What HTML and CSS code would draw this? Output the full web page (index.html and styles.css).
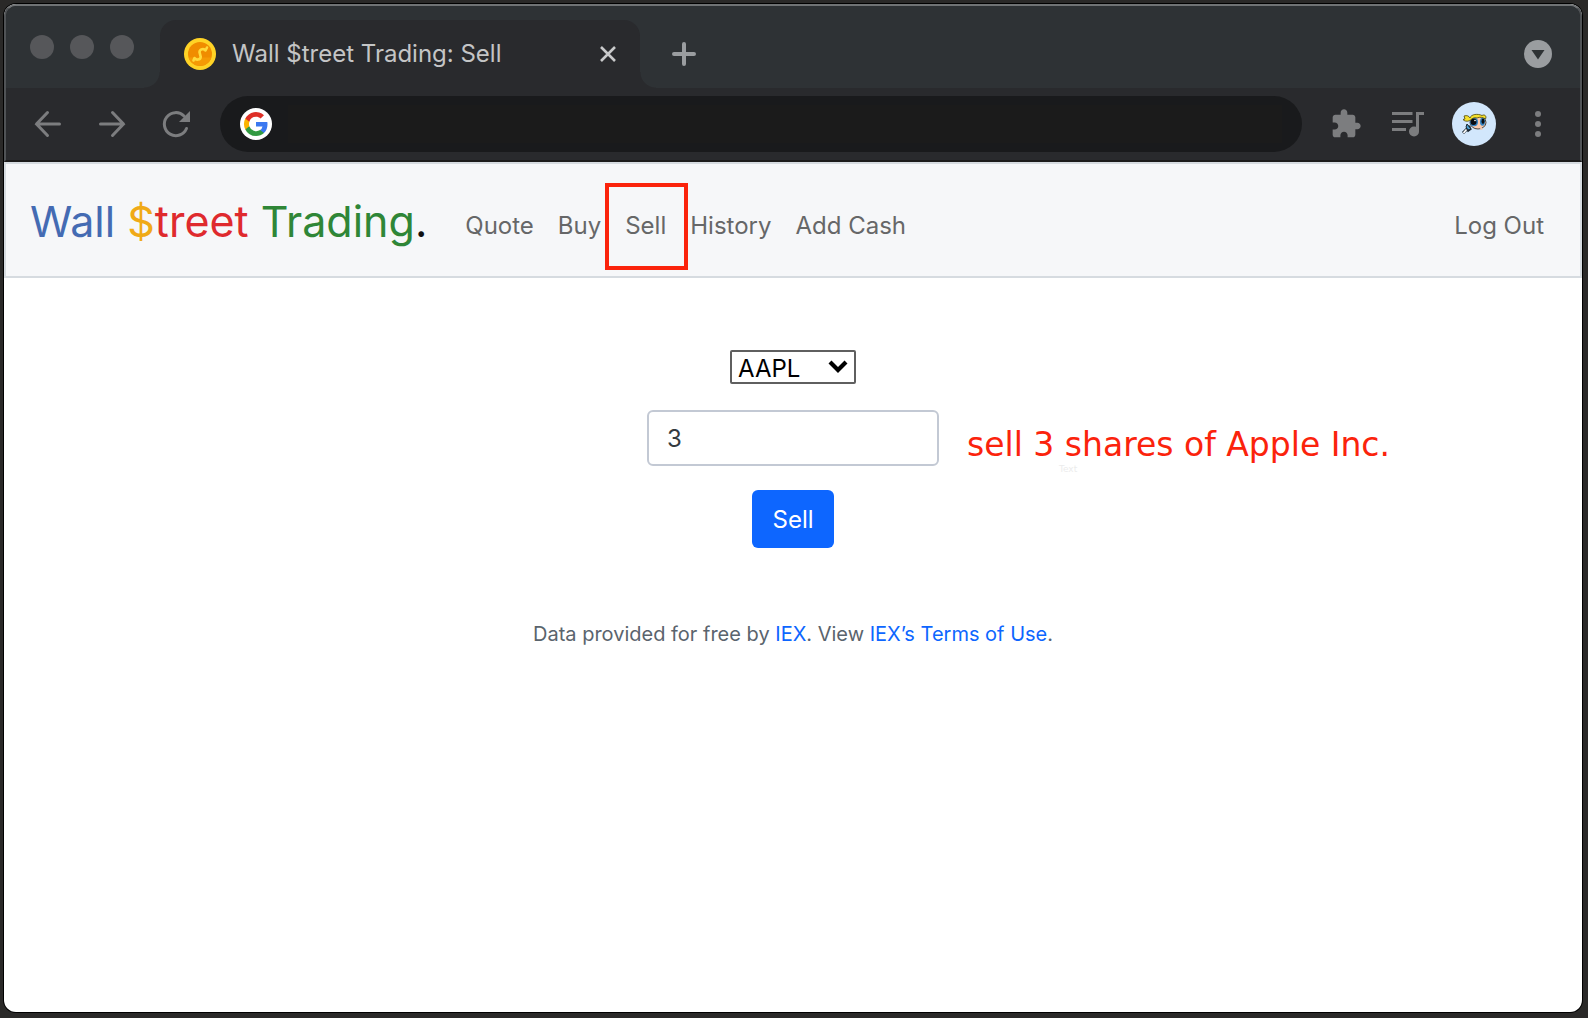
FILE: index.html
```html
<!DOCTYPE html>
<html lang="en">
<head>
<meta charset="utf-8">
<meta name="viewport" content="width=device-width, initial-scale=1">
<title>Wall $treet Trading: Sell</title>
<link rel="stylesheet" href="styles.css">
</head>
<body>
<div class="window">
  <header class="chrome">
    <div class="tabstrip">
      <div class="lights"><span class="light"></span><span class="light"></span><span class="light"></span></div>
      <div class="tab">
        <svg class="favicon" width="32" height="32" viewBox="0 0 32 32" aria-hidden="true">
          <circle cx="16" cy="16" r="16" fill="#ffd326"/>
          <circle cx="16" cy="16" r="12" fill="#f08c00"/>
          <path d="M4.600 19.500A12 12 0 0 0 27.400 19.500Z" fill="#f59a05"/>
          <path d="M10.500 20c1.500 2.500 6 2 6.200-1.200l-1.200-4.600c.2-3.400 4.500-3.900 6-1.700M21.500 12.500l1.500-3M10.500 20L9.500 22.500" fill="none" stroke="#ffd93b" stroke-width="2.600" stroke-linecap="round"/>
        </svg>
        <span class="tab-title">Wall $treet Trading: Sell</span>
        <button class="tab-close" type="button" aria-label="Close tab">
          <svg width="16" height="16" viewBox="0 0 16 16"><path d="M1 1L15 15M15 1L1 15" stroke="#c9cacb" stroke-width="2.600"/></svg>
        </button>
      </div>
      <button class="tab-new" type="button" aria-label="New tab">
        <svg width="24" height="24" viewBox="0 0 24 24"><path d="M12 2V22M2 12H22" stroke="#9a9da0" stroke-width="4" stroke-linecap="round"/></svg>
      </button>
      <button class="tab-search" type="button" aria-label="Search tabs">
        <svg width="28" height="28" viewBox="0 0 28 28"><circle cx="14" cy="14" r="14" fill="#9a9da0"/><path d="M7.500 10H20.500L14 19.500Z" fill="#2e3235"/></svg>
      </button>
    </div>
    <div class="toolbar">
      <div class="history">
        <button class="tool" type="button" aria-label="Back">
          <svg width="32" height="32" viewBox="0 0 32 32"><path d="M27.500 16H4.500M15.500 4.500L4.500 16L15.500 27.500" class="line"/></svg>
        </button>
        <button class="tool" type="button" aria-label="Forward">
          <svg width="32" height="32" viewBox="0 0 32 32"><path d="M4.500 16H27.500M16.500 4.500L27.500 16L16.500 27.500" class="line"/></svg>
        </button>
        <button class="tool" type="button" aria-label="Reload">
          <svg width="32" height="32" viewBox="0 0 32 32"><path d="M26.500 20.500A11.500 11.500 0 1 1 24 8" class="line"/><path d="M30 3V14H19Z" fill="#7c7d7f"/></svg>
        </button>
      </div>
      <label class="omnibox">
        <svg width="32" height="32" viewBox="0 0 32 32" aria-hidden="true">
          <circle cx="16" cy="16" r="16" fill="#fff"/>
          <g transform="translate(4 4)">
            <path d="M23.500 12.300c0-.8-.1-1.600-.2-2.300H12v4.500h6.500a5.500 5.500 0 0 1-2.400 3.600v3h3.900c2.300-2.100 3.500-5.200 3.500-8.800Z" fill="#3b78f0"/>
            <path d="M12 24c3.200 0 6-1.100 8-2.900l-3.900-3a7.300 7.300 0 0 1-10.800-3.800h-4v3.100A12 12 0 0 0 12 24Z" fill="#319a41"/>
            <path d="M5.300 14.300a7.200 7.200 0 0 1 0-4.600V6.600h-4a12 12 0 0 0 0 10.800Z" fill="#fbb400"/>
            <path d="M12 4.800c1.800 0 3.300.6 4.600 1.800L20 3.200A12 12 0 0 0 1.300 6.600l4 3.100A7.200 7.200 0 0 1 12 4.800Z" fill="#de2f27"/>
          </g>
        </svg>
        <input class="address" type="text" aria-label="Address">
      </label>
      <div class="actions">
        <button class="tool extensions" type="button" aria-label="Extensions">
          <svg width="32" height="32" viewBox="0 0 24 24"><path d="M20.500 11H19V7c0-1.100-.9-2-2-2h-4V3.500C13 2.120 11.880 1 10.500 1S8 2.120 8 3.500V5H4c-1.100 0-1.990.9-1.990 2v3.800H3.500c1.490 0 2.700 1.210 2.700 2.700s-1.210 2.700-2.700 2.700H2V20c0 1.100.9 2 2 2h3.800v-1.500c0-1.490 1.210-2.700 2.700-2.700s2.700 1.210 2.700 2.700V22H17c1.100 0 2-.9 2-2v-4h1.500c1.380 0 2.500-1.120 2.500-2.500S21.880 11 20.500 11z" fill="#7c7d7f"/></svg>
        </button>
        <button class="tool" type="button" aria-label="Media controls">
          <svg width="32" height="32" viewBox="0 0 32 32"><path d="M0 5.500H20.500M0 13.500H20.500M0 21.500H14" stroke="#7c7d7f" stroke-width="3"/><path d="M24 4H32V7H27V23.500H24Z" fill="#7c7d7f"/><circle cx="22" cy="23.500" r="5" fill="#7c7d7f"/></svg>
        </button>
        <button class="avatar" type="button" aria-label="Profile">
          <svg width="44" height="44" viewBox="0 0 44 44">
            <circle cx="22" cy="22" r="22" fill="#d2e7fc"/>
            <path d="M18 24L14 28L11 31M19 26L15 29" stroke="#1b2730" stroke-width="3"/>
            <path d="M15 22L19 27L16 28L14 25Z" fill="#4b9fd0" stroke="#1b2730"/>
            <path d="M14.500 27.500L11.500 31" stroke="#fff" stroke-width="1.800"/>
            <ellipse cx="26" cy="20.500" rx="8" ry="6.500" fill="#f8c9ad" stroke="#26221b" stroke-width=".8"/>
            <path d="M28.500 25.500L30 27.500" stroke="#f8c9ad" stroke-width="2"/>
            <ellipse cx="22" cy="20" rx="4" ry="4.200" fill="#3183c4"/>
            <ellipse cx="21.500" cy="19.800" rx="3" ry="3.300" fill="#090b10"/>
            <ellipse cx="30.500" cy="19.800" rx="2.500" ry="4" fill="#3183c4"/>
            <ellipse cx="31" cy="19.200" rx="1.500" ry="2.800" fill="#090b10"/>
            <circle cx="23" cy="18.500" r=".8" fill="#fff"/>
            <path d="M18 16C19 12 26 11.500 30 13.500C32.500 12 35 14 33.500 17C31 15.500 28 14.500 25 16C22 15 20 16.500 18 18.500C15 20 12 19 11 17.500L13 17L12 14C15 13 17 14 18 16Z" fill="#f5e02c" stroke="#4b4512" stroke-width=".8"/>
          </svg>
        </button>
        <button class="tool" type="button" aria-label="Menu">
          <svg width="32" height="32" viewBox="0 0 32 32" fill="#7c7d7f"><circle cx="16" cy="6" r="3"/><circle cx="16" cy="16" r="3"/><circle cx="16" cy="26" r="3"/></svg>
        </button>
      </div>
    </div>
  </header>

  <nav class="navbar">
    <a class="brand" href="#"><span class="blue">Wall</span> <span class="yellow">$</span><span class="red">treet</span> <span class="green">Trading</span>.</a>
    <ul class="links">
      <li><a class="link" href="#">Quote</a></li>
      <li><a class="link" href="#">Buy</a></li>
      <li class="marked"><a class="link" href="#">Sell</a></li>
      <li><a class="link" href="#">History</a></li>
      <li><a class="link" href="#">Add Cash</a></li>
    </ul>
    <a class="link logout" href="#">Log Out</a>
  </nav>

  <main class="main">
    <form class="form">
      <div class="picker">
        <select class="symbol" aria-label="Symbol"><option>AAPL</option></select>
        <svg class="picker-arrow" width="20" height="14" viewBox="0 0 20 14" aria-hidden="true"><path d="M2 2L10 10L18 2" fill="none" stroke="#000" stroke-width="4.200"/></svg>
      </div>
      <div class="amount">
        <input class="shares" type="text" inputmode="numeric" value="3" aria-label="Shares">
        <span class="note">sell 3 shares of Apple Inc.</span>
        <span class="note-stub">Text</span>
      </div>
      <button class="submit" type="submit">Sell</button>
    </form>
  </main>
  <footer class="footer">Data provided for free by <a href="#">IEX</a>. View <a href="#">IEX’s Terms of Use</a>.</footer>
</div>
</body>
</html>
```
FILE: styles.css
```css
* {
  box-sizing: border-box;
}

body {
  margin: 0;
  padding: 4px 6px 6px 4px;
  background: #2a2928;
  font-family: Inter, "Liberation Sans", sans-serif;
  font-size: 24px;
  line-height: 36px;
}

button {
  display: flex;
  align-items: center;
  justify-content: center;
  padding: 0;
  border: 0;
  background: none;
  font: inherit;
}

a {
  text-decoration: none;
}

.window {
  display: flex;
  flex-direction: column;
  min-height: calc(100vh - 10px);
  border-radius: 12px;
  background: #fff;
  box-shadow: 0 0 0 1px #000;
}

/* Browser frame */
.chrome {
  border: 2px solid #505356;
  border-top-color: #707375;
  border-bottom-color: #1c1b1b;
  border-radius: 12px 12px 0 0;
  background: #292a2d;
}

.tabstrip {
  display: flex;
  align-items: center;
  height: 82px;
  padding: 14px 28px 0 24px;
  border-radius: 10px 10px 0 0;
  background: #2e3235;
}

.lights {
  display: flex;
  gap: 16px;
  width: 130px;
  padding-bottom: 14px;
}

.light {
  width: 24px;
  height: 24px;
  border-radius: 50%;
  background: #56575a;
}

.tab {
  position: relative;
  display: flex;
  align-items: center;
  gap: 16px;
  width: 480px;
  height: 68px;
  padding: 0 24px;
  border-radius: 16px 16px 0 0;
  background: #292a2d;
}

.tab::before,
.tab::after {
  content: "";
  position: absolute;
  bottom: 0;
  width: 16px;
  height: 16px;
}

.tab::before {
  right: 100%;
  background: radial-gradient(circle at 0 0, transparent 15px, #292a2d 16px);
}

.tab::after {
  left: 100%;
  background: radial-gradient(circle at 100% 0, transparent 15px, #292a2d 16px);
}

.tab-title {
  flex: 1;
  color: #c4c5c6;
  white-space: nowrap;
}

.tab-new {
  margin-left: 32px;
}

.tab-search {
  margin-left: auto;
}

.toolbar {
  display: flex;
  align-items: center;
  gap: 28px;
  height: 72px;
  padding: 0 26px;
}

.history {
  display: flex;
  gap: 32px;
}

.tool {
  width: 32px;
  height: 32px;
}

.line {
  fill: none;
  stroke: #7c7d7f;
  stroke-width: 3;
  stroke-linecap: round;
}

.omnibox {
  display: flex;
  flex: 1;
  align-items: center;
  gap: 16px;
  height: 56px;
  padding: 0 20px;
  border-radius: 28px;
  background: #191a1c;
}

.address {
  flex: 1;
  border: 0;
  outline: 0;
  background: #1b1b1b;
  color: #c4c5c6;
  font: inherit;
}

.actions {
  display: flex;
  align-items: center;
  gap: 26px;
}

.extensions {
  margin-right: 4px;
}

.avatar {
  margin-left: 2px;
}

/* Site navigation */
.navbar {
  display: flex;
  align-items: center;
  gap: 26px;
  min-height: 116px;
  padding: 8px 24px;
  border: 2px solid #d6dbe0;
  background: #f6f7f9;
}

.brand {
  padding-top: 2px;
  color: #111;
  font-size: 43px;
  line-height: 72px;
  white-space: nowrap;
}

.blue { color: #446bb3; }
.yellow { color: #f0aa17; }
.red { color: #df2a2e; }
.green { color: #2f8637; }

.links {
  display: flex;
  margin: 0;
  padding: 12px 0 0;
  list-style: none;
}

.link {
  display: block;
  padding: 0 12px;
  color: #666768;
  white-space: nowrap;
}

.logout {
  margin-left: auto;
  padding-top: 12px;
}

.marked {
  position: relative;
}

.marked::after {
  content: "";
  position: absolute;
  inset: -25px -10px -26px -8px;
  border: 4px solid #fb230c;
  pointer-events: none;
}

/* Sell form */
.main {
  padding: 72px 24px 0;
}

.form {
  display: flex;
  flex-direction: column;
  align-items: center;
}

.picker {
  position: relative;
  margin-bottom: 26px;
}

.symbol {
  display: block;
  width: 126px;
  height: 34px;
  padding: 2px 6px 0;
  border: 2px solid #5f5f5f;
  border-radius: 2px;
  background: #fff;
  color: #000;
  font: inherit;
  line-height: 30px;
  appearance: none;
}

.picker-arrow {
  position: absolute;
  top: 10px;
  right: 8px;
  pointer-events: none;
}

.amount {
  position: relative;
  margin-bottom: 24px;
}

.shares {
  display: block;
  width: 292px;
  height: 56px;
  padding: 0 18px;
  border: 2px solid #c3c9d4;
  border-radius: 6px;
  background: #fff;
  color: #343a40;
  font: inherit;
}

.note {
  position: absolute;
  top: 17px;
  left: 320px;
  color: #fb230c;
  font-family: "DejaVu Sans", sans-serif;
  font-size: 33px;
  white-space: nowrap;
}

.note-stub {
  position: absolute;
  top: 51px;
  left: 412px;
  color: #ececec;
  font-family: "DejaVu Sans", sans-serif;
  font-size: 9px;
  line-height: 16px;
}

.submit {
  height: 58px;
  padding: 2px 20px 0;
  border-radius: 6px;
  background: #0d66ff;
  color: #fff;
}

.footer {
  padding: 68px 24px;
  color: #5a646d;
  font-size: 20px;
  line-height: 36px;
  text-align: center;
}

.footer a {
  color: #0d66ff;
}
```
